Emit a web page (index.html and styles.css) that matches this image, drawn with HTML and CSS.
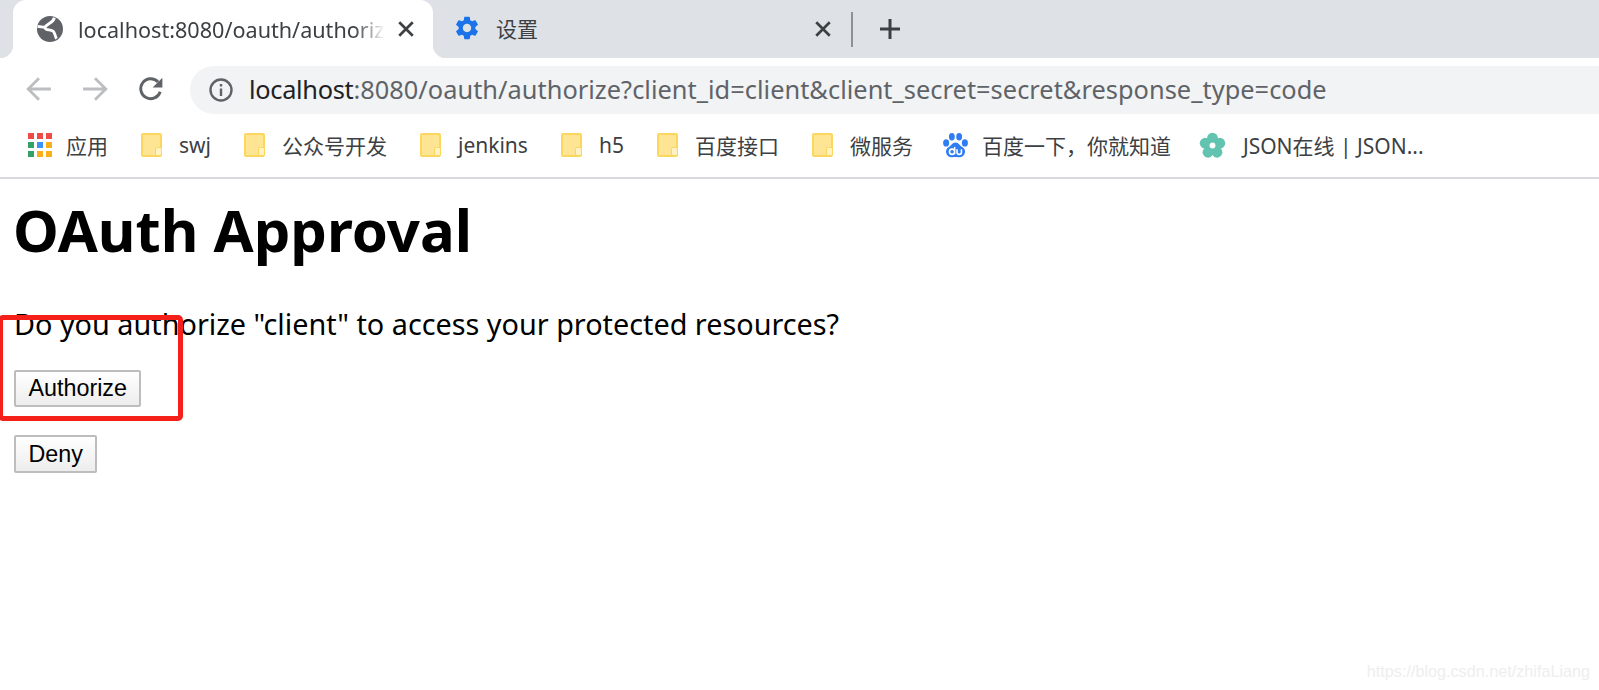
FILE: index.html
```html
<!DOCTYPE html>
<html lang="en">
<head>
  <meta charset="UTF-8" />
  <title>OAuth Approval</title>
  <link rel="stylesheet" href="styles.css">
</head>
<body>
  <!-- Browser Tabs -->
  <div class="tabstrip">
    <div class="tab tab-active">
      <svg class="tab-icon" viewBox="0 0 24 24">
        <circle cx="12" cy="12" r="12" fill="#5f6368"/>
        <path fill="none" stroke="#fff" stroke-width="2.6" d="M16 1.500C15 7 9 6.500 7.500 10.500C7 13.500 13 12 15 14C16.500 15.500 16.500 18 18 21M0.500 9.500L7.500 10.500"/>
      </svg>
      <span class="tab-title">localhost:8080/oauth/authorize</span>
      <svg class="tab-close" viewBox="0 0 16 16"><path d="M2 2l12 12M14 2L2 14"/></svg>
    </div>
    <div class="tab tab-other">
      <svg class="gear-icon" viewBox="0 0 24 24"><path fill="#1a73e8" d="M19.14 12.94c.04-.3.06-.61.06-.94 0-.32-.02-.64-.07-.94l2.03-1.58c.18-.14.23-.41.12-.61l-1.92-3.32c-.12-.22-.37-.29-.59-.22l-2.39.96c-.5-.38-1.03-.7-1.62-.94l-.36-2.54c-.04-.24-.24-.41-.48-.41h-3.84c-.24 0-.43.17-.47.41l-.36 2.54c-.59.24-1.13.57-1.62.94l-2.39-.96c-.22-.08-.47 0-.59.22L2.74 8.87c-.12.21-.08.47.12.61l2.03 1.58c-.05.3-.09.63-.09.94s.02.64.07.94l-2.03 1.58c-.18.14-.23.41-.12.61l1.92 3.32c.12.22.37.29.59.22l2.39-.96c.5.38 1.03.7 1.62.94l.36 2.54c.05.24.24.41.48.41h3.84c.24 0 .44-.17.47-.41l.36-2.54c.59-.24 1.13-.56 1.62-.94l2.39.96c.22.08.47 0 .59-.22l1.92-3.32c.12-.22.07-.47-.12-.61l-2.01-1.58zM12 15.6c-1.98 0-3.6-1.62-3.6-3.6s1.62-3.6 3.6-3.6 3.6 1.62 3.6 3.6-1.62 3.6-3.6 3.6z"/></svg>
      <span class="tab-title">设置</span>
      <svg class="tab-close" viewBox="0 0 16 16"><path d="M2 2l12 12M14 2L2 14"/></svg>
    </div>
    <div class="tab-sep"></div>
    <svg class="tab-new" viewBox="0 0 24 24"><path d="M12 2v20M2 12h20"/></svg>
  </div>

  <!-- Address Bar -->
  <div class="toolbar">
    <div class="nav-btn">
      <svg viewBox="0 0 24 24"><path class="off" d="M23 12H2M12 2L2 12l10 10"/></svg>
    </div>
    <div class="nav-btn">
      <svg viewBox="0 0 24 24"><path class="off" d="M1 12h21M12 2l10 10-10 10"/></svg>
    </div>
    <div class="nav-btn">
      <svg viewBox="0 0 24 24"><path class="on" d="M20.500 14.500A9.200 9.200 0 1 1 18.500 5.500"/><path fill="#5f6368" d="M22.500 1.500v9h-9z"/></svg>
    </div>
    <div class="omnibox">
      <svg class="info-icon" viewBox="0 0 24 24"><circle cx="12" cy="12" r="10.500" fill="none" stroke="#5f6368" stroke-width="2.4"/><path fill="#5f6368" d="M10.800 10.500h2.400v7.500h-2.400zM10.800 6h2.400v2.500h-2.400z"/></svg>
      <span class="url"><span class="url-host">localhost</span>:8080/oauth/authorize?client_id=client&amp;client_secret=secret&amp;response_type=code</span>
    </div>
  </div>

  <!-- Bookmarks Bar -->
  <div class="bookmarks">
    <div class="bookmark">
      <div class="apps-grid">
        <i class="red"></i><i class="red"></i><i class="red"></i>
        <i class="green"></i><i class="blue"></i><i class="orange"></i>
        <i class="green"></i><i class="orange"></i><i class="orange"></i>
      </div>
      <span>应用</span>
    </div>
    <div class="bookmark"><div class="folder"></div><span>swj</span></div>
    <div class="bookmark"><div class="folder"></div><span>公众号开发</span></div>
    <div class="bookmark"><div class="folder"></div><span>jenkins</span></div>
    <div class="bookmark"><div class="folder"></div><span>h5</span></div>
    <div class="bookmark"><div class="folder"></div><span>百度接口</span></div>
    <div class="bookmark"><div class="folder"></div><span>微服务</span></div>
    <div class="bookmark bookmark-baidu">
      <svg class="fav" viewBox="0 0 24 24">
        <g fill="#2f7df0">
          <ellipse cx="3" cy="9.500" rx="2.900" ry="3.500"/>
          <ellipse cx="8.500" cy="3.700" rx="2.800" ry="3.600"/>
          <ellipse cx="15.500" cy="3.700" rx="2.800" ry="3.600"/>
          <ellipse cx="21" cy="9.500" rx="2.900" ry="3.500"/>
          <path d="M12 9c3 0 4 3 6.500 4.500 2.500 1.600 3 3.500 2.500 5.500-.6 3-3 4.500-6 4.200-2-.2-4-.3-6 0-3 .3-5.400-1.200-6-4.200-.5-2 .2-4 2.500-5.500C8 12 9 9 12 9z"/>
        </g>
        <path fill="none" stroke="#fff" stroke-width="1.5" d="M11.200 13.500v7M11.200 18a2.500 2.500 0 1 0-5 0 2.500 2.500 0 1 0 5 0M13.500 15.500v3.200c0 2.400 4.200 2.400 4.200 0v-3.200"/>
      </svg>
      <span>百度一下，你就知道</span>
    </div>
    <div class="bookmark bookmark-json">
      <svg class="flower" viewBox="0 0 24 24">
        <g fill="#62c4b0">
          <circle cx="12" cy="5.500" r="4.800"/>
          <circle cx="18.500" cy="10" r="4.800"/>
          <circle cx="16" cy="18" r="4.800"/>
          <circle cx="8" cy="18" r="4.800"/>
          <circle cx="5.500" cy="10" r="4.800"/>
          <circle cx="12" cy="12" r="6"/>
        </g>
        <circle cx="12" cy="12" r="2.600" fill="#fff"/>
      </svg>
      <span>JSON在线 | JSON...</span>
    </div>
  </div>

  <!-- Page Content -->
  <main class="page">
    <h1>OAuth Approval</h1>
    <p>Do you authorize "client" to access your protected resources?</p>
    <form class="approve-form"><button type="button">Authorize</button></form>
    <form class="deny-form"><button type="button">Deny</button></form>
  </main>

  <!-- Annotation and Watermark -->
  <div class="red-box"></div>
  <div class="watermark">https://blog.csdn.net/zhifaLiang</div>
</body>
</html>
```

FILE: styles.css
```css
/* Reset and Base Styles */
* {
  margin: 0;
  padding: 0;
  box-sizing: border-box;
}
html, body {
  height: 690px;
  overflow: hidden;
}
body {
  position: relative;
  background-color: #fff;
  color: #000;
  font-family: "Noto Sans", "Noto Sans CJK SC", sans-serif;
}

/* Tab Strip */
.tabstrip {
  height: 58px;
  background-color: #dee1e6;
  display: flex;
  align-items: stretch;
  padding-left: 13px;
}
.tab {
  position: relative;
  display: flex;
  align-items: center;
  color: #3c4043;
}
.tab-active {
  width: 420px;
  padding: 0 18px 0 24px;
  background-color: #fff;
  border-radius: 13px 13px 0 0;
}
.tab-active::before,
.tab-active::after {
  content: "";
  position: absolute;
  bottom: 0;
  width: 13px;
  height: 13px;
}
.tab-active::before {
  left: -13px;
  background: radial-gradient(circle at 0 0, #dee1e6 13px, #fff 13.5px);
}
.tab-active::after {
  right: -13px;
  background: radial-gradient(circle at 100% 0, #dee1e6 13px, #fff 13.5px);
}
.tab-other {
  width: 418px;
  padding: 0 19px 0 20px;
}
.tab-icon {
  width: 26px;
  height: 26px;
  flex-shrink: 0;
}
.gear-icon {
  width: 28px;
  height: 28px;
  flex-shrink: 0;
  margin-bottom: 2px;
}
.tab-title {
  flex: 1;
  overflow: hidden;
  white-space: nowrap;
  font-size: 21.6px;
  margin-left: 15px;
  margin-right: 12px;
}
.tab-active .tab-title {
  -webkit-mask-image: linear-gradient(to right, #000 90%, transparent 100%);
  mask-image: linear-gradient(to right, #000 90%, transparent 100%);
}
.tab-other .tab-title {
  font-size: 21px;
  padding-bottom: 2px;
}
.tab-close {
  width: 18px;
  height: 18px;
  flex-shrink: 0;
  fill: none;
  stroke: #3c4043;
  stroke-width: 2.4;
}
.tab-sep {
  width: 2px;
  height: 35px;
  margin-top: 12px;
  background-color: #8d9094;
}
.tab-new {
  width: 24px;
  height: 24px;
  margin: 17px 0 0 25px;
  fill: none;
  stroke: #3c4043;
  stroke-width: 3;
}

/* Toolbar */
.toolbar {
  height: 64px;
  background-color: #fff;
  display: flex;
  padding: 8px 0 8px 11px;
}
.nav-btn {
  width: 56px;
  display: flex;
  align-items: center;
  justify-content: center;
  padding-bottom: 2px;
}
.nav-btn svg {
  width: 26px;
  height: 26px;
  fill: none;
  stroke-width: 2.6;
}
.nav-btn .off {
  stroke: #bcbec1;
}
.nav-btn .on {
  stroke: #5f6368;
}
.omnibox {
  flex: 1;
  margin-left: 11px;
  display: flex;
  align-items: center;
  padding-left: 19px;
  background-color: #f1f3f4;
  border-radius: 24px 0 0 24px;
}
.info-icon {
  width: 24px;
  height: 24px;
  flex-shrink: 0;
}
.url {
  margin-left: 16px;
  padding-bottom: 2px;
  font-size: 25.35px;
  letter-spacing: 0.04px;
  color: #5f6368;
  white-space: nowrap;
}
.url-host {
  color: #202124;
  letter-spacing: -0.3px;
}

/* Bookmarks */
.bookmarks {
  height: 57px;
  display: flex;
  align-items: center;
  gap: 33px;
  padding: 0 0 9px 28px;
  border-bottom: 2px solid #d9d9de;
}
.bookmark {
  display: flex;
  align-items: center;
  gap: 17px;
  font-size: 21px;
  color: #3c4043;
  white-space: nowrap;
}
.bookmark-baidu {
  margin-left: -3px;
}
.bookmark-json {
  margin-left: -5px;
}
.apps-grid {
  display: grid;
  grid-template-columns: repeat(3, 6px);
  grid-auto-rows: 6px;
  gap: 3px;
  margin-right: -3px;
}
.apps-grid i {
  display: block;
}
.apps-grid .red { background-color: #f04b44; }
.apps-grid .green { background-color: #34a266; }
.apps-grid .blue { background-color: #3b94f5; }
.apps-grid .orange { background-color: #fbb01a; }
.folder {
  position: relative;
  width: 21px;
  height: 24px;
  background-color: #fee593;
  border: 2px solid #fbd75f;
  border-radius: 2px;
}
.folder::after {
  content: "";
  position: absolute;
  right: -2px;
  bottom: -1px;
  width: 5px;
  height: 7px;
  background-color: #fff3c4;
  border: 1px solid #fbd75f;
  border-radius: 2px;
}
.fav {
  width: 25px;
  height: 25px;
  margin-right: -3px;
}
.flower {
  width: 27px;
  height: 27px;
}

/* Page Content */
.page {
  padding: 17px 14px 0;
}
.page h1 {
  font-size: 58px;
  line-height: 67px;
  font-weight: 700;
  margin-left: -1px;
}
.page p {
  margin-top: 41px;
  font-size: 28.8px;
  line-height: 40px;
}
.approve-form {
  margin-top: 26px;
}
.deny-form {
  margin-top: 28px;
}
.page button {
  height: 37px;
  padding: 0 12.5px;
  font-family: "Liberation Sans", Arial, sans-serif;
  font-size: 23.3px;
  color: #000;
  background: linear-gradient(#fff, #ededed);
  border: 2px solid #bdbdbd;
  border-radius: 2px;
}
.deny-form button {
  height: 38px;
}

/* Overlays */
.red-box {
  position: absolute;
  left: -2px;
  top: 315px;
  width: 185px;
  height: 106px;
  border: 5px solid #f5201a;
  border-radius: 5px;
}
.watermark {
  position: absolute;
  right: 9px;
  top: 662px;
  font-family: "Liberation Sans", Arial, sans-serif;
  font-size: 16.2px;
  color: #eeeeee;
}
```
